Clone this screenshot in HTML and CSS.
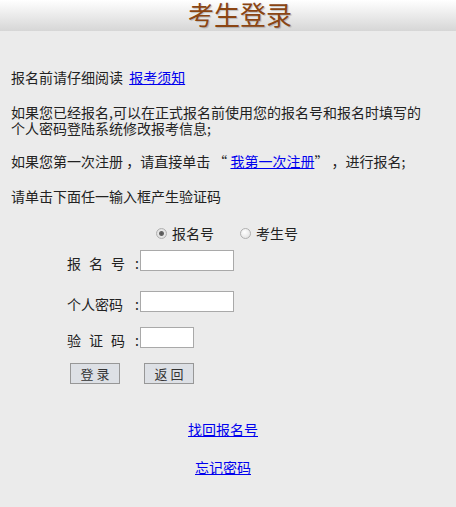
FILE: index.html
```html
<!DOCTYPE html>
<html lang="zh-CN">

<head>
    <meta charset="UTF-8">
    <meta name="viewport" content="width=device-width, initial-scale=1.0">
    <title>考生登录</title>
    <link rel="stylesheet" href="styles.css">
</head>

<body>
    <div class="header"><span class="title">考生登录</span></div>

    <div class="notes">
        <p class="note-first">报名前请仔细阅读 <a href="#">报考须知</a></p>
        <p class="note-second">如果您已经报名,可以在正式报名前使用您的报名号和报名时填写的个人密码登陆系统修改报考信息;</p>
        <p class="note-third">如果您第一次注册 ，请直接单击 “ <a href="#">我第一次注册</a>” ，进行报名;</p>
        <p class="note-last">请单击下面任一输入框产生验证码</p>
    </div>

    <form class="login-form" action="#" method="POST">
        <div class="radio-row">
            <label class="radio-item"><input type="radio" name="idType" value="bmh" checked>报名号</label>
            <label class="radio-item"><input type="radio" name="idType" value="ksh">考生号</label>
        </div>
        <div class="form-row row-id">
            <label class="field-label" for="userId"><span class="spaced">报名号</span><span class="colon">:</span></label>
            <input type="text" class="form-control" id="userId" name="userId">
        </div>
        <div class="form-row row-pwd">
            <label class="field-label" for="password"><span>个人密码</span><span class="colon">:</span></label>
            <input type="password" class="form-control" id="password" name="password">
        </div>
        <div class="form-row row-code">
            <label class="field-label" for="code"><span class="spaced">验证码</span><span class="colon">:</span></label>
            <input type="text" class="form-control short" id="code" name="code">
        </div>
        <div class="button-row">
            <button type="submit" class="btn">登 录</button>
            <button type="button" class="btn">返 回</button>
        </div>
    </form>

    <div class="links">
        <a href="#" class="link-first">找回报名号</a>
        <a href="#" class="link-second">忘记密码</a>
    </div>
</body>

</html>
```

FILE: styles.css
```css
body {
    font-family: "Noto Sans CJK SC", "Liberation Sans", sans-serif;
    font-size: 14px;
    color: #222;
    background-color: #ebebeb;
    margin: 0;
    padding: 0;
}

a {
    color: #0000ee;
}

.header {
    display: flex;
    justify-content: center;
    align-items: flex-start;
    height: 31px;
    padding-left: 24px;
    background: linear-gradient(#ffffff, #d6d6d6);
}

.header .title {
    margin-top: 1px;
    font-size: 26px;
    line-height: 26px;
    color: #8b4513;
    text-shadow: 1px 1px 1px rgba(0, 0, 0, 0.2);
}

.notes {
    padding: 38px 24px 0 11px;
}

.notes p {
    margin: 0 0 19px;
    line-height: 16px;
}

.notes .note-first a {
    margin-left: 3px;
}

.notes .note-second {
    margin-bottom: 17px;
}

.notes .note-last {
    margin-bottom: 0;
}

.login-form {
    margin: 21px 0 0;
}

.radio-row {
    display: flex;
    justify-content: center;
    gap: 26px;
    line-height: 16px;
    padding-right: 2px;
}

.radio-item {
    display: flex;
    align-items: center;
}

.radio-item input {
    appearance: none;
    -webkit-appearance: none;
    width: 11px;
    height: 11px;
    margin: 0 5px 0 0;
    border: 1px solid #b0b0b0;
    border-radius: 50%;
    background: radial-gradient(circle at 40% 35%, #ffffff, #dcdcdc);
}

.radio-item input:checked {
    background: radial-gradient(circle, #555 0, #666 2px, #e8e8e8 3px, #d6d6d6 100%);
}

.form-row {
    display: flex;
    align-items: center;
    padding-left: 67px;
}

.row-id {
    margin-top: 8px;
}

.row-pwd {
    margin-top: 19px;
}

.row-code {
    margin-top: 14px;
}

.field-label {
    display: flex;
    justify-content: space-between;
    width: 72px;
    margin-right: 1px;
    padding-top: 6px;
    line-height: 16px;
}

.field-label .spaced {
    letter-spacing: 8px;
}

.form-control {
    width: 94px;
    height: 21px;
    padding: 1px 3px;
    font-size: 13px;
    border: 1px solid #a9a9a9;
    background-color: #fff;
    box-sizing: border-box;
    outline: none;
}

.form-control.short {
    width: 54px;
}

.button-row {
    display: flex;
    gap: 24px;
    margin-top: 15px;
    padding-left: 70px;
}

.btn {
    width: 50px;
    height: 21px;
    padding: 0;
    font-family: "Noto Sans CJK SC", sans-serif;
    font-size: 13px;
    color: #333;
    background-color: #dde0e5;
    border: 1px solid #979797;
    cursor: pointer;
}

.links {
    display: flex;
    flex-direction: column;
    align-items: center;
    padding-right: 10px;
    margin-top: 37px;
    line-height: 16px;
}

.links .link-second {
    margin-top: 22px;
}
```
